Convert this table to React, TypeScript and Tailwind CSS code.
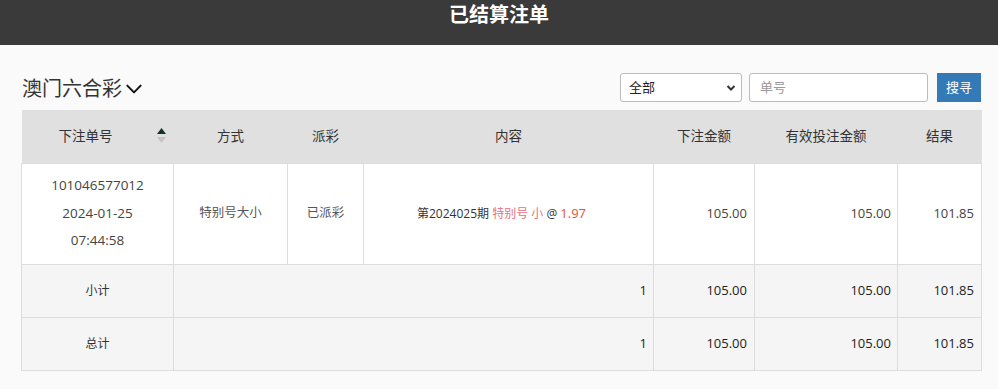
import React from "react";

const font = { fontFamily: '"Open Sans", "Noto Sans CJK SC", sans-serif' };

const cols = [152, 114, 76, 290, 101, 143, 84];

const SortIcon = () => (
  <span className="absolute right-[8px] top-[18px] flex flex-col items-center gap-[3px]">
    <svg width="9" height="6" viewBox="0 0 9 6">
      <path d="M4.5 0 L9 6 L0 6 Z" fill="#15302c" />
    </svg>
    <svg width="9" height="6" viewBox="0 0 9 6">
      <path d="M0 0 L9 0 L4.5 6 Z" fill="#c4c4c4" />
    </svg>
  </span>
);

export default function App() {
  return (
    <div className="min-h-[389px] bg-[#fafafa] text-[#333]" style={font}>
      <div className="h-[45px] bg-[#3a3a3a] flex justify-center pt-[2px]">
        <h1 className="text-white text-[20px] font-bold leading-[26px]">已结算注单</h1>
      </div>

      <div className="ml-[21px] w-[960px] pt-[28px]">
        <div className="flex items-center justify-between h-[29px] mb-[8px]">
          <div className="flex items-center gap-[2px] pl-[1px] pt-[2px]">
            <span className="text-[20px] text-[#333] leading-none">澳门六合彩</span>
            <svg width="20" height="20" viewBox="0 0 24 24" fill="none" stroke="#111" strokeWidth="2.4" strokeLinecap="round" strokeLinejoin="round">
              <path d="M4 8 L12 16 L20 8" />
            </svg>
          </div>
          <div className="flex items-center">
            <div className="relative w-[122px] h-[29px] border border-[#bbb] rounded-[3px] bg-white flex items-center pl-[8px] text-[13px] text-[#222]">
              全部
              <svg className="absolute right-[5px] top-[10px]" width="10" height="8" viewBox="0 0 10 8" fill="none" stroke="#333" strokeWidth="2">
                <path d="M1.5 2 L5 5.5 L8.5 2" />
              </svg>
            </div>
            <div className="ml-[7px] w-[179px] h-[29px] border border-[#bbb] rounded-[3px] bg-white flex items-center pl-[10px] text-[13px] text-[#999]">
              单号
            </div>
            <button className="ml-[9px] w-[44px] h-[29px] bg-[#337ab7] text-white text-[13px]">搜寻</button>
          </div>
        </div>

        <table className="w-[960px] border-collapse table-fixed text-[13px] text-[#444]">
          <colgroup>
            {cols.map((w, i) => (
              <col key={i} style={{ width: w }} />
            ))}
          </colgroup>
          <thead>
            <tr className="h-[53px] bg-[#e0e0e0] text-[13.5px] text-[#333]">
              <th className="relative font-normal border-b border-[#ddd] pr-[24px]">
                下注单号
                <SortIcon />
              </th>
              <th className="font-normal border-b border-[#ddd]">方式</th>
              <th className="font-normal border-b border-[#ddd]">派彩</th>
              <th className="font-normal border-b border-[#ddd]">内容</th>
              <th className="font-normal border-b border-[#ddd]">下注金额</th>
              <th className="font-normal border-b border-[#ddd]">有效投注金额</th>
              <th className="font-normal border-b border-[#ddd]">结果</th>
            </tr>
          </thead>
          <tbody>
            <tr className="h-[101px] bg-white">
              <td className="border border-[#ddd] text-center leading-[27.5px] text-[13.5px]">
                101046577012
                <br />
                2024-01-25
                <br />
                07:44:58
              </td>
              <td className="border border-[#ddd] text-center text-[12.5px] text-[#555]">特别号大小</td>
              <td className="border border-[#ddd] text-center text-[12.5px] text-[#555]">已派彩</td>
              <td className="border border-[#ddd] text-center pr-[14px] text-[12px] text-[#333]">
                第2024025期 <span className="text-[#e8707e]">特别号 小</span> @ <span className="text-[#e8503a] text-[13px]">1.97</span>
              </td>
              <td className="border border-[#ddd] text-right pr-[7px] text-[13px]">105.00</td>
              <td className="border border-[#ddd] text-right pr-[6px] text-[13px]">105.00</td>
              <td className="border border-[#ddd] text-right pr-[7px] text-[13px]">101.85</td>
            </tr>
            {["小计", "总计"].map((label) => (
              <tr key={label} className="h-[53px] bg-[#f5f5f5] text-[#222] text-[13px]">
                <td className="border border-[#ddd] text-center text-[12px] text-[#333]">{label}</td>
                <td colSpan={3} className="border border-[#ddd] text-right pr-[6px]">1</td>
                <td className="border border-[#ddd] text-right pr-[7px]">105.00</td>
                <td className="border border-[#ddd] text-right pr-[6px]">105.00</td>
                <td className="border border-[#ddd] text-right pr-[7px]">101.85</td>
              </tr>
            ))}
          </tbody>
        </table>
      </div>
    </div>
  );
}
